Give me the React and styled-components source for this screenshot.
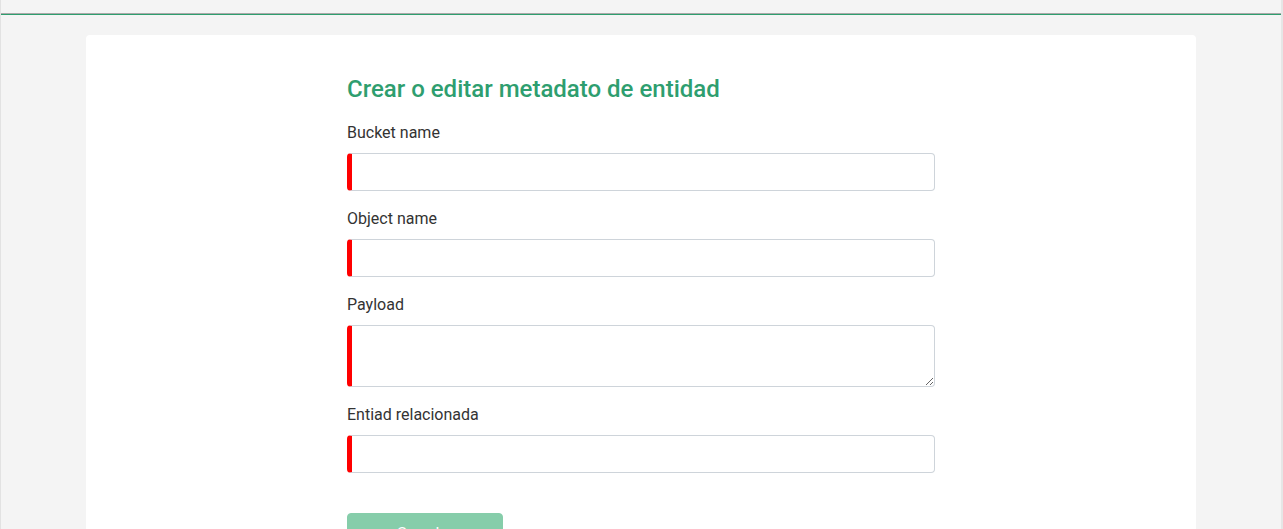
import React from "react";
import styled, { createGlobalStyle } from "styled-components";

const Global = createGlobalStyle`
  html, body { margin: 0; padding: 0; }
  body {
    background: #f4f4f4;
    font-family: Roboto, "Liberation Sans", Arial, sans-serif;
    color: #333;
  }
  * { box-sizing: border-box; }
`;

const Frame = styled.div`
  min-height: 529px;
  background: #f4f4f4;
  border-left: 1px solid #e2e2e2;
  border-right: 2px solid #e6e6e6;
  overflow: hidden;
`;

const Header = styled.header`
  box-sizing: content-box;
  height: 14px;
  box-shadow: inset 0 -1px 0 #a9a9a9;
  border-bottom: 1px solid #2e9e6e;
`;

const Card = styled.main`
  width: 1110px;
  margin: 20px auto 0;
  background: #fff;
  border-radius: 4px;
  padding: 40px 0 40px;
  min-height: 520px;
`;

const Form = styled.form`
  width: 588px;
  margin: 0 auto;
  display: flex;
  flex-direction: column;
`;

const Title = styled.h2`
  margin: 0 0 17px;
  font-size: 24px;
  font-weight: 500;
  line-height: 29px;
  color: #2e9e6f;
`;

const Field = styled.div`
  display: flex;
  flex-direction: column;
  margin-bottom: 16px;
`;

const Label = styled.label`
  font-size: 16px;
  line-height: 24px;
  color: #333;
  margin-bottom: 8px;
`;

const inputBase = `
  width: 100%;
  font-family: Roboto, "Liberation Sans", Arial, sans-serif;
  font-size: 16px;
  line-height: 24px;
  padding: 6px 12px;
  border: 1px solid #ced4da;
  border-left: 5px solid #ff0000;
  border-radius: 4px;
  background: #fff;
  color: #495057;
  outline: none;
`;

const Input = styled.input`
  ${inputBase}
  height: 38px;
`;

const TextArea = styled.textarea`
  ${inputBase}
  height: 62px;
  resize: vertical;
  display: block;
`;

const Actions = styled.div`
  margin-top: 24px;
`;

const Button = styled.button`
  display: flex;
  align-items: flex-start;
  justify-content: center;
  width: 156px;
  height: 42px;
  border: 1px solid #86cdaa;
  border-radius: 4px;
  background: #86cdaa;
  color: #fff;
  font-family: Roboto, "Liberation Sans", Arial, sans-serif;
  font-size: 16px;
  line-height: 24px;
  padding: 8px 12px 8px;
  cursor: not-allowed;
`;

const fields = [
  { id: "bucket", label: "Bucket name" },
  { id: "object", label: "Object name" },
  { id: "payload", label: "Payload", area: true },
  { id: "entity", label: "Entiad relacionada" },
];

export default function App() {
  return (
    <>
      <Global />
      <Frame>
        <Header />
        <Card>
          <Form onSubmit={(e) => e.preventDefault()}>
            <Title>Crear o editar metadato de entidad</Title>
            {fields.map((f) => (
              <Field key={f.id}>
                <Label htmlFor={f.id}>{f.label}</Label>
                {f.area ? <TextArea id={f.id} rows={2} /> : <Input id={f.id} type="text" />}
              </Field>
            ))}
            <Actions>
              <Button type="submit" disabled>Guardar</Button>
            </Actions>
          </Form>
        </Card>
      </Frame>
    </>
  );
}
